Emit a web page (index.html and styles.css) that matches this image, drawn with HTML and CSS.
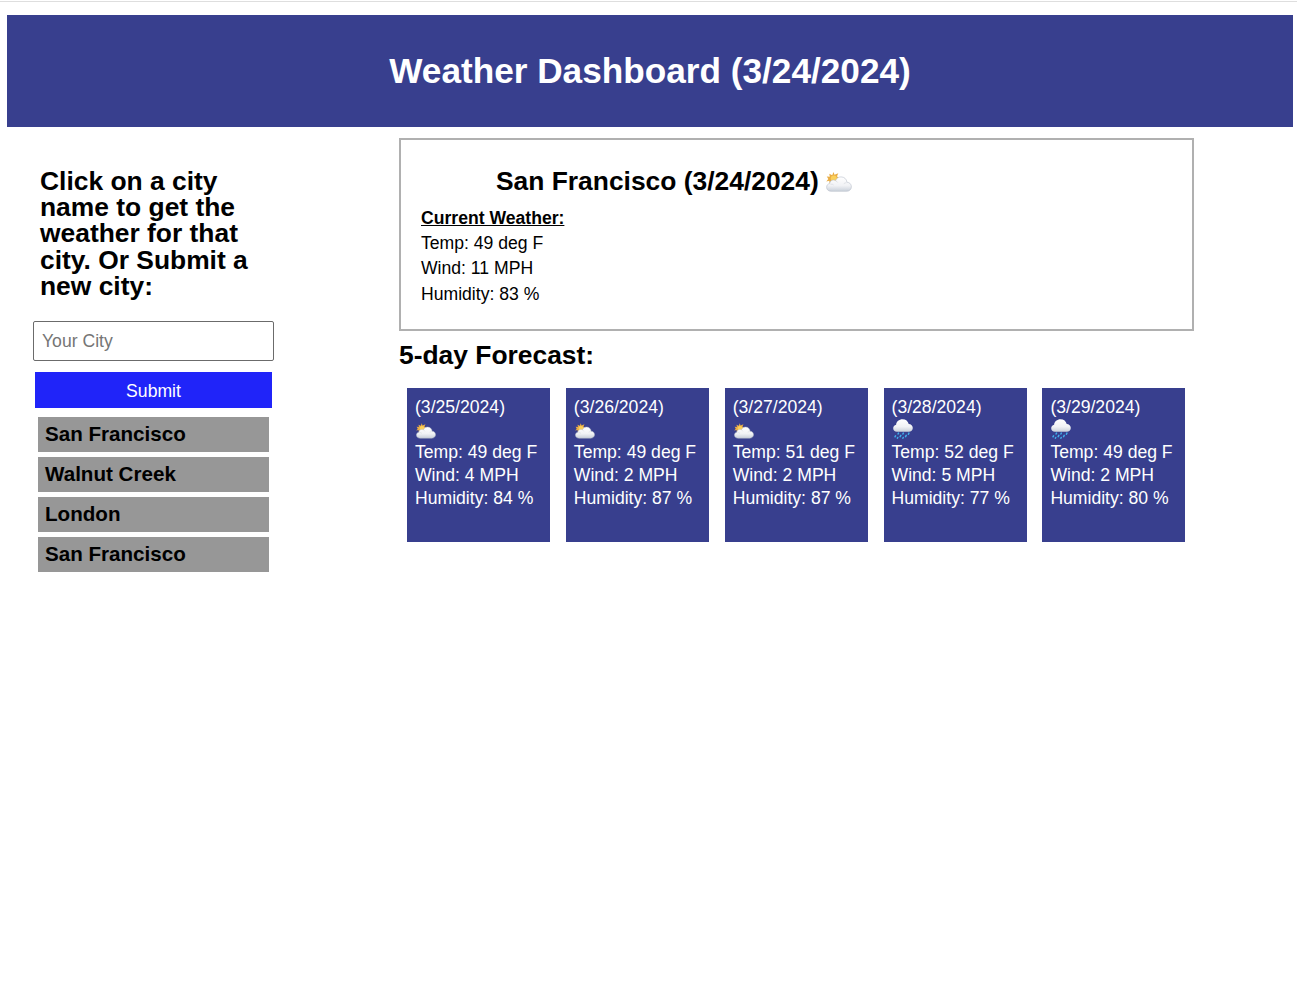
FILE: index.html
```html
<!DOCTYPE html>
<html lang="en">
<head>
<meta charset="utf-8">
<title>Weather Dashboard</title>
<link rel="stylesheet" href="styles.css">
</head>
<body>
<svg class="defs" aria-hidden="true">
  <defs>
    <linearGradient id="cloudFill" x1="0" y1="0" x2="0" y2="1">
      <stop offset="0" stop-color="#ffffff"/>
      <stop offset=".6" stop-color="#f1f2f5"/>
      <stop offset="1" stop-color="#c9d0da"/>
    </linearGradient>
    <symbol id="suncloud" viewBox="0 0 26 20">
      <path d="M7.500 0l1 2.800L12.300 1.200l-1.300 3 2 2-9.500 4.800L3.300 8.800.3 9.400l2-2.300L.8 4.600l3 .2L3.300 1.800l2.900 1.500z" fill="#e9ad45"/>
      <circle cx="7.800" cy="6.600" r="3" fill="#fbd05a"/>
      <path d="M5.100 19.300C2.400 19.300.6 17.600.6 15.300c0-2.100 1.300-3.500 3.200-3.800.1-2.100 1.600-3.500 3.600-3.500.8 0 1.500.2 2.100.7C10.400 6.200 12.400 4.900 15 4.900c3.300 0 5.700 2.200 5.900 5.300 2.700.2 4.500 2 4.500 4.500 0 2.700-2 4.600-4.900 4.600z" fill="url(#cloudFill)" stroke="#b9c0cb" stroke-width=".6"/>
      <path d="M4.500 12.200c1.300-.2 2.300.1 3.200.8M10 9c.8.3 1.400.8 1.700 1.500M20.500 10.700c-1.100 0-2 .4-2.700 1" fill="none" stroke="#d5d9e0" stroke-width=".7"/>
    </symbol>
    <symbol id="raincloud" viewBox="0 0 20 20">
      <path d="M3.800 12.700C1.700 12.700.2 11.200.2 9.200c0-1.900 1.200-3.200 2.900-3.500C3.400 2.500 6.100.2 9.500.2c3.200 0 5.700 2 6.200 4.900 2.400.1 4.100 1.700 4.100 3.900 0 2.200-1.700 3.700-4.100 3.700z" fill="url(#cloudFill)"/>
      <path d="M5.500 14.100l-.4.900M10.300 14.100l-.4.900M15.900 14.100l-.5 1.100M2.500 16.800l-.5 1M7.800 16.400l-.6 1.200M13.200 16.400l-.6 1.200M4.700 18.500l-.3.700M10.200 18.500l-.3.700" fill="none" stroke="#42aeea" stroke-width="1.500" stroke-linecap="round"/>
    </symbol>
  </defs>
</svg>
<header class="banner"><h1>Weather Dashboard (3/24/2024)</h1></header>
<main class="layout">
  <aside class="sidebar">
    <h2 class="prompt">Click on a city<br>name to get the<br>weather for that<br>city. Or Submit a<br>new city:</h2>
    <input class="city-input" type="text" placeholder="Your City">
    <button class="submit">Submit</button>
    <ul class="cities">
      <li>San Francisco</li>
      <li>Walnut Creek</li>
      <li>London</li>
      <li>San Francisco</li>
    </ul>
  </aside>
  <section class="content">
    <div class="current">
      <h2 class="current-title">San Francisco (3/24/2024) <svg class="icon-large"><use href="#suncloud"/></svg></h2>
      <p class="current-label">Current Weather:</p>
      <p>Temp: 49 deg F</p>
      <p>Wind: 11 MPH</p>
      <p>Humidity: 83 %</p>
    </div>
    <h2 class="forecast-title">5-day Forecast:</h2>
    <div class="forecast">
      <div class="card"><p>(3/25/2024)</p><div class="icon-row"><svg class="icon-sun"><use href="#suncloud"/></svg></div><p>Temp: 49 deg F</p><p>Wind: 4 MPH</p><p>Humidity: 84 %</p></div>
      <div class="card"><p>(3/26/2024)</p><div class="icon-row"><svg class="icon-sun"><use href="#suncloud"/></svg></div><p>Temp: 49 deg F</p><p>Wind: 2 MPH</p><p>Humidity: 87 %</p></div>
      <div class="card"><p>(3/27/2024)</p><div class="icon-row"><svg class="icon-sun"><use href="#suncloud"/></svg></div><p>Temp: 51 deg F</p><p>Wind: 2 MPH</p><p>Humidity: 87 %</p></div>
      <div class="card"><p>(3/28/2024)</p><div class="icon-row"><svg class="icon-rain"><use href="#raincloud"/></svg></div><p>Temp: 52 deg F</p><p>Wind: 5 MPH</p><p>Humidity: 77 %</p></div>
      <div class="card"><p>(3/29/2024)</p><div class="icon-row"><svg class="icon-rain"><use href="#raincloud"/></svg></div><p>Temp: 49 deg F</p><p>Wind: 2 MPH</p><p>Humidity: 80 %</p></div>
    </div>
  </section>
</main>
</body>
</html>
```

FILE: styles.css
```css
* { box-sizing: border-box; }
html { background: #fff; }
body {
  margin: 0;
  padding-top: 1px;
  font-family: "Liberation Sans", Arial, sans-serif;
  font-size: 17.6px;
  color: #000;
}
body::before { content: ""; display: block; height: 1px; background: #dedede; }
h1, h2, p, ul { margin: 0; padding: 0; }
.defs { position: absolute; width: 0; height: 0; }
.banner {
  margin: 13px 4px 0 7px;
  height: 112px;
  background: #383f8e;
  color: #fff;
  display: flex;
  align-items: center;
  justify-content: center;
}
h1 { font-size: 35.2px; line-height: 40px; white-space: nowrap; }
h2 { font-size: 26.4px; line-height: 26.3px; white-space: nowrap; }
.layout { display: flex; }
.sidebar { width: 399px; padding: 40.8px 0 0 33px; }
.prompt { height: 132.2px; padding-left: 7px; }
.city-input {
  display: block;
  width: 241px;
  height: 40px;
  margin-top: 21px;
  padding: 2px 8px 0;
  border: 1px solid #6b6b6b;
  border-radius: 2px;
  font: inherit;
}
.city-input::placeholder { color: #757575; opacity: 1; }
.submit {
  display: block;
  width: 237px;
  height: 36px;
  margin: 11px 0 9px 2px;
  padding: 4px 0 0;
  border: 0;
  background: #2024f9;
  color: #fff;
  font: inherit;
}
.cities {
  list-style: none;
  display: flex;
  flex-direction: column;
  gap: 5px;
  width: 231px;
  margin-left: 5px;
}
.cities li {
  height: 35px;
  padding-left: 7px;
  background: #979797;
  font-size: 20.6px;
  font-weight: bold;
  line-height: 33px;
}
.content { width: 795px; padding-top: 11px; }
.current { height: 193px; padding: 28px 20px 0; border: 2px solid #b0b0b0; }
.current p { line-height: 25.3px; }
.current-title { height: 26.3px; padding-left: 75px; margin-bottom: 11.6px; }
.current .current-label { font-weight: bold; text-decoration: underline; }
.icon-large { width: 26px; height: 20px; vertical-align: -2px; }
.forecast-title { margin-top: 11px; }
.forecast { display: flex; justify-content: space-between; margin-top: 19.7px; padding: 0 8.6px 0 8px; }
.card { width: 143px; height: 154px; padding: 8px; background: #383f8e; color: #fff; }
.card p { line-height: 22.9px; white-space: nowrap; }
.icon-row { height: 22px; padding-left: 1px; }
.icon-row svg { display: block; }
.icon-row:has(.icon-sun) { padding-top: 4.5px; }
.icon-sun { width: 20px; height: 16px; }
.icon-rain { width: 20px; height: 20px; }
```
